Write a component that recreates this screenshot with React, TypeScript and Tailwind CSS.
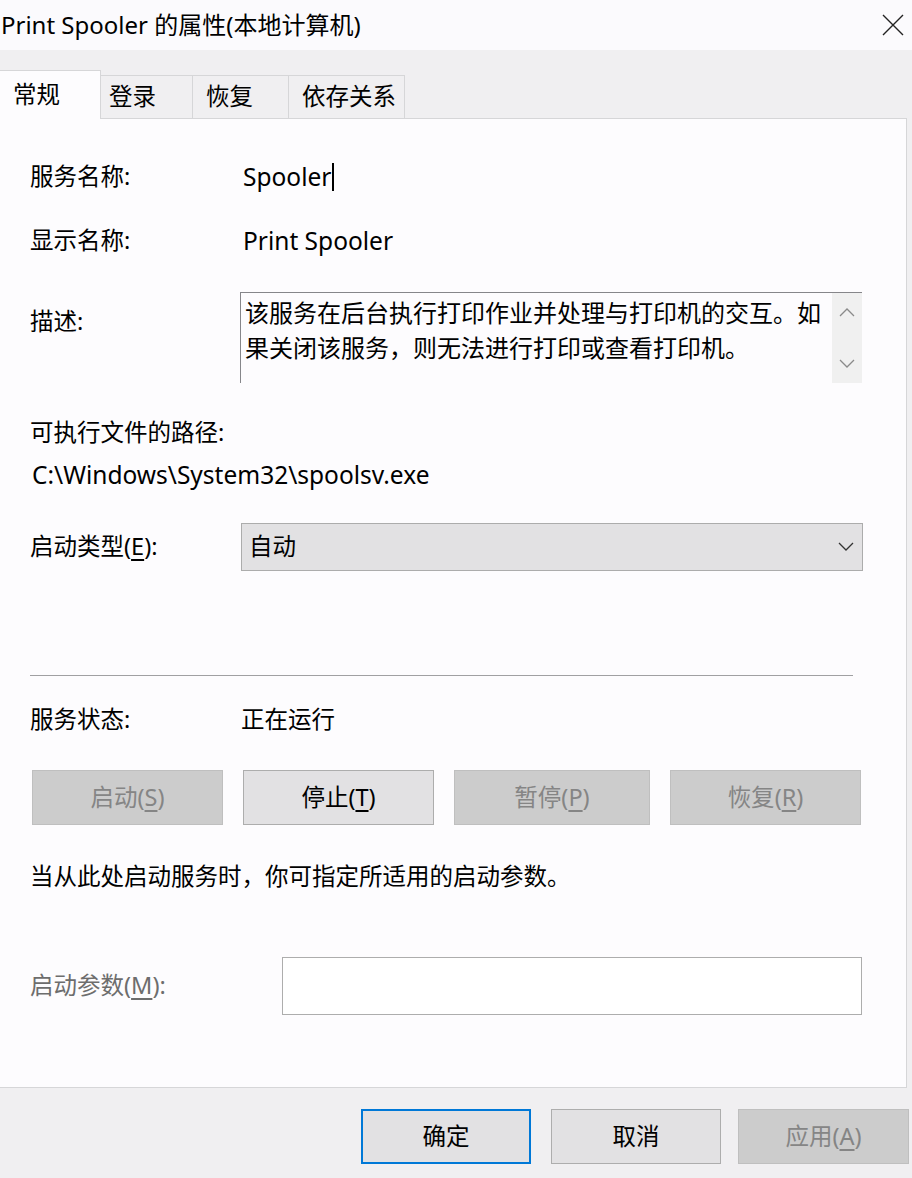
const Chevron = ({ up = false, className = "" }: { up?: boolean; className?: string }) => (
  <svg width="16" height="10" viewBox="0 0 16 10" className={className}>
    <polyline
      points={up ? "1,9 8,2 15,9" : "1,1 8,8 15,1"}
      fill="none"
      stroke="currentColor"
      strokeWidth="1.3"
    />
  </svg>
);

const Mn = ({ children }: { children: string }) => <span className="underline underline-offset-4">{children}</span>;

const App = () => {
  const actions = [
    { label: "启动", key: "S", enabled: false, w: "w-[191px]" },
    { label: "停止", key: "T", enabled: true, w: "w-[191px]" },
    { label: "暂停", key: "P", enabled: false, w: "w-[196px]" },
    { label: "恢复", key: "R", enabled: false, w: "w-[191px]" },
  ];

  return (
    <div className="w-[912px] h-[1178px] flex flex-col bg-[#f0eff1] text-black text-[23.5px] font-['Noto_Sans','Noto_Sans_CJK_SC',sans-serif]">
      {/* title bar */}
      <div className="h-[50px] shrink-0 bg-[#fbfafd] flex items-center justify-between pl-[1px] pr-[7px]">
        <span className="text-[24px] leading-none">Print Spooler 的属性(本地计算机)</span>
        <svg width="24" height="24" viewBox="0 0 24 24" className="text-[#222]">
          <path d="M2 2 L22 22 M22 2 L2 22" stroke="currentColor" strokeWidth="1.4" />
        </svg>
      </div>

      {/* tabs */}
      <div className="h-[68px] shrink-0 flex items-end pt-[20px]">
        <div className="w-[101px] h-[49px] bg-[#fdfcfe] border-t border-r border-[#d6d6d8] flex items-center pl-[13px] -mb-px relative z-10">
          常规
        </div>
        {["登录", "恢复", "依存关系"].map((t, i) => (
          <div
            key={i}
            className={`h-[43px] bg-[#f0eff1] border-t border-r border-[#d6d6d8] flex items-center pl-[8px] ${
              i === 0 ? "w-[92px]" : i === 1 ? "w-[96px] pl-[13px]" : "w-[116px] pl-[13px]"
            }`}
          >
            {t}
          </div>
        ))}
      </div>

      {/* panel */}
      <div className="h-[970px] shrink-0 mr-[5px] bg-[#fdfcfe] border border-l-0 border-[#d6d6d8] pl-[30px] pr-[43px] flex flex-col">
        <div className="mt-[42px] h-[32px] flex items-center">
          <span className="w-[213px]">服务名称:</span>
          <span className="flex items-center text-[24.5px]">
            Spooler
            <span className="inline-block w-[2px] h-[28px] bg-black ml-[1px]" />
          </span>
        </div>

        <div className="mt-[32px] h-[32px] flex items-center">
          <span className="w-[213px]">显示名称:</span>
          <span className="text-[24.5px]">Print Spooler</span>
        </div>

        <div className="mt-[35px] flex">
          <span className="w-[210px] mt-[13px] leading-[32px]">描述:</span>
          <div className="w-[622px] h-[91px] border-t border-l border-[#86868a] flex">
            <div className="flex-1 pl-[4px] pt-[2px] leading-[35px] text-[24px]">
              该服务在后台执行打印作业并处理与打印机的交互。如果关闭该服务，则无法进行打印或查看打印机。
            </div>
            <div className="w-[30px] bg-[#f0f0f0] flex flex-col items-center justify-between py-[14px] text-[#8a8a8a]">
              <Chevron up />
              <Chevron />
            </div>
          </div>
        </div>

        <div className="mt-[34px] h-[32px] flex items-center">可执行文件的路径:</div>
        <div className="mt-[10px] h-[32px] flex items-center pl-[2px] text-[24.5px]">C:\Windows\System32\spoolsv.exe</div>

        <div className="mt-[32px] flex items-center">
          <span className="w-[211px]">
            启动类型(<Mn>E</Mn>):
          </span>
          <div className="w-[622px] h-[48px] bg-[#e2e1e3] border border-[#acacac] flex items-center justify-between pl-[7px] pr-[8px]">
            <span>自动</span>
            <Chevron className="text-[#333]" />
          </div>
        </div>

        <div className="mt-[104px] w-[823px] h-px bg-[#a0a0a2]" />

        <div className="mt-[28px] h-[32px] flex items-center">
          <span className="w-[211px]">服务状态:</span>
          <span>正在运行</span>
        </div>

        <div className="mt-[34px] ml-[2px] w-[829px] flex justify-between">
          {actions.map((a) => (
            <div
              key={a.key}
              className={`${a.w} h-[55px] flex items-center justify-center border ${
                a.enabled ? "bg-[#e2e1e3] border-[#adadad] text-black" : "bg-[#cccccc] border-[#bfbfbf] text-[#858585]"
              }`}
            >
              {a.label}(<Mn>{a.key}</Mn>)
            </div>
          ))}
        </div>

        <div className="mt-[36px] h-[32px] flex items-center">当从此处启动服务时，你可指定所适用的启动参数。</div>

        <div className="mt-[64px] flex items-center">
          <span className="w-[252px] text-[#6d6d6d]">
            启动参数(<Mn>M</Mn>):
          </span>
          <div className="w-[580px] h-[58px] bg-white border border-[#adadad]" />
        </div>
      </div>

      {/* bottom buttons */}
      <div className="flex pl-[361px] pt-[21px]">
        <div className="w-[170px] h-[55px] bg-[#e2e1e3] border-2 border-[#0078d7] flex items-center justify-center">确定</div>
        <div className="ml-[20px] w-[170px] h-[55px] bg-[#e2e1e3] border border-[#adadad] flex items-center justify-center">取消</div>
        <div className="ml-[17px] w-[171px] h-[55px] bg-[#cccccc] border border-[#bfbfbf] text-[#858585] flex items-center justify-center">
          应用(<Mn>A</Mn>)
        </div>
      </div>
    </div>
  );
};

export default App;
